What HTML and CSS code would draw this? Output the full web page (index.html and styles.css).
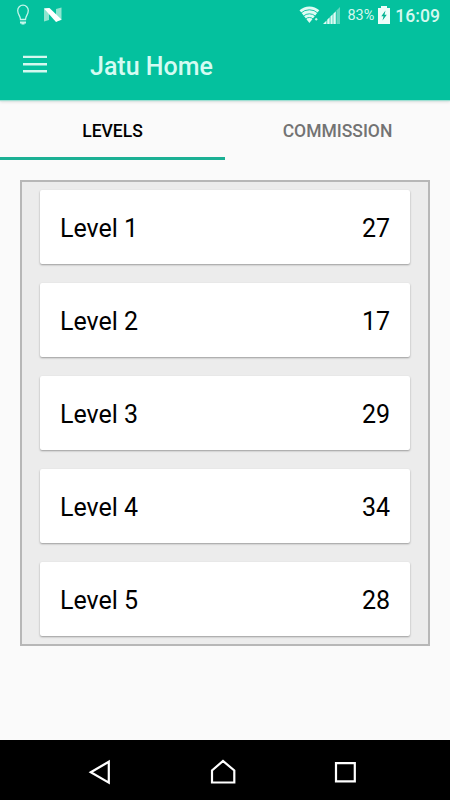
FILE: index.html
```html
<!DOCTYPE html>
<html lang="en">
<head>
    <meta charset="UTF-8">
    <title>Jatu Home</title>
    <link rel="stylesheet" href="styles.css">
</head>
<body>
<div class="header">
    <div class="statusbar">
        <svg class="bulb" width="14" height="22" viewBox="0 0 14 22">
            <path d="M4.500 15.500C4.500 12 1.700 10.600 1.700 6.500A5.300 5.300 0 0 1 12.300 6.500C12.300 10.600 9.500 12 9.500 15.500Z" fill="none" stroke="#c5f6ea" stroke-width="1.300"/>
            <path d="M4 17.500H10V19.500H8.500V20.500H5.500V19.500H4Z" fill="#c5f6ea"/>
        </svg>
        <svg class="nougat" width="20" height="16" viewBox="0 0 20 16">
            <path d="M1 1.500L6 1V13L1 14.500Z" fill="#8fe5d0"/>
            <path d="M13 2L18.500 0.500V13L13 14.500Z" fill="#8fe5d0"/>
            <path d="M1 1.500L6.500 1L18.500 12.500L13 15Z" fill="#fff"/>
        </svg>
        <div class="status">
            <svg class="wifi" width="22" height="18" viewBox="0 0 22 18">
                <path d="M0.500 4.300A14.500 14.500 0 0 1 20.300 4.300L10.400 17Z" fill="#e0fbf4"/>
                <path d="M1.800 7.200A12.500 12.500 0 0 1 19 7.200M4.300 10.200A9 9 0 0 1 16.500 10.200M6.600 13A5.500 5.500 0 0 1 14.200 13" fill="none" stroke="#04c19e" stroke-width="0.900"/>
                <path d="M15 12.500L17 10.500L20 13.500L17.500 16Z" fill="#04c19e"/>
                <path d="M17.200 11.800L18.800 13.300L17.200 14.800L15.700 13.300Z" fill="#c5f6ea"/>
            </svg>
            <svg class="signal" width="18" height="18" viewBox="0 0 18 18">
                <path d="M0 17L3.500 13.500V17ZM4.200 12.800L6.700 10.300V17H4.200ZM7.400 9.600L9.700 7.300V17H7.400Z" fill="#e0fbf4"/>
                <path d="M10.300 6.700L12.800 4.200V17H10.300Z" fill="#e0fbf4"/>
                <path d="M13.500 3.500L17 0V17H13.500Z" fill="#62d8bf"/>
            </svg>
            <span class="percent">83%</span>
            <svg class="battery" width="12" height="18" viewBox="0 0 12 18">
                <path d="M3 0H9V2H12V18H0V2H3Z" fill="#eefdf9"/>
                <path d="M7.500 4.500L3.300 10.200H5.500L4.500 14.500L8.800 8.800H6.500Z" fill="#04b292"/>
            </svg>
            <span class="clock">16:09</span>
        </div>
    </div>
    <div class="toolbar">
        <svg class="menu" width="24" height="18" viewBox="0 0 24 18">
            <path d="M0 1.900H24M0 9.200H24M0 16.200H24" stroke="#d5f8ef" stroke-width="2.400"/>
        </svg>
        <span class="title">Jatu Home</span>
    </div>
</div>
<div class="tabs">
    <div class="tab active">LEVELS</div>
    <div class="tab">COMMISSION</div>
</div>
<div class="content">
    <div class="levels">
        <div class="card"><span>Level 1</span><span>27</span></div>
        <div class="card"><span>Level 2</span><span>17</span></div>
        <div class="card"><span>Level 3</span><span>29</span></div>
        <div class="card"><span>Level 4</span><span>34</span></div>
        <div class="card"><span>Level 5</span><span>28</span></div>
    </div>
</div>
<div class="navbar">
    <svg width="28" height="28" viewBox="0 0 28 28">
        <path d="M4.800 14.300L22.800 3.700V24.700Z" fill="none" stroke="#fff" stroke-width="2.200"/>
    </svg>
    <svg width="28" height="28" viewBox="0 0 28 28">
        <path d="M3 24.500V12.500L14 3L25.300 12.500V24.500Z" fill="none" stroke="#fff" stroke-width="2.200"/>
    </svg>
    <svg width="28" height="28" viewBox="0 0 28 28">
        <path d="M5 5.200H23.800V23.300H5Z" fill="none" stroke="#fff" stroke-width="2.200"/>
    </svg>
</div>
</body>
</html>
```

FILE: styles.css
```css
* {
    box-sizing: border-box;
}
body {
    display: flex;
    flex-direction: column;
    height: 800px;
    margin: 0;
    background: #fafafa;
    font-family: Roboto, "Liberation Sans", sans-serif;
    color: #000;
}
svg {
    display: block;
    flex: none;
}
.header {
    height: 100px;
    background: #04c19e;
    box-shadow: 0 1px 1px #9edfd2, 0 2px 3px rgba(0, 0, 0, 0.12);
}
.statusbar {
    display: flex;
    align-items: center;
    height: 30px;
    padding: 0 10px 0 16px;
}
.nougat {
    margin-left: 13px;
}
.status {
    display: flex;
    align-items: center;
    margin-left: auto;
    color: #d5f8ef;
}
.signal {
    margin: 1px 0 0 2px;
}
.percent {
    margin: 1px 0 0 6px;
    font-size: 14.500px;
    line-height: 30px;
}
.battery {
    margin-left: 4px;
}
.clock {
    margin: 1px 0 0 5px;
    font-size: 17.600px;
    font-weight: 500;
    line-height: 30px;
}
.toolbar {
    display: flex;
    align-items: center;
    height: 70px;
    padding-left: 23px;
}
.menu {
    margin-bottom: 2px;
}
.title {
    margin: 3px 0 0 43px;
    font-size: 25px;
    font-weight: 500;
    line-height: 30px;
    color: #d5fbf2;
}
.tabs {
    display: flex;
    height: 60px;
}
.tab {
    flex: 1;
    padding-top: 2px;
    border-bottom: 3px solid transparent;
    font-size: 17.500px;
    font-weight: 500;
    line-height: 58px;
    text-align: center;
    color: #737373;
}
.tab.active {
    border-color: #1bb094;
    color: #000;
}
.content {
    flex: 1;
    padding: 20px;
}
.levels {
    display: flex;
    flex-direction: column;
    gap: 19.200px;
    height: 466px;
    padding: 7.600px 18px;
    border: 2px solid #b7b7b7;
    background: #ececec;
}
.card {
    display: flex;
    flex: none;
    justify-content: space-between;
    height: 74px;
    padding: 2px 20px 0;
    border-radius: 2px;
    background: #fff;
    box-shadow: 0 1px 2px rgba(0, 0, 0, 0.35);
    font-size: 25px;
    line-height: 74px;
}
.navbar {
    display: flex;
    justify-content: space-between;
    height: 60px;
    padding: 18px 91px 0 86px;
    background: #000;
}
```
